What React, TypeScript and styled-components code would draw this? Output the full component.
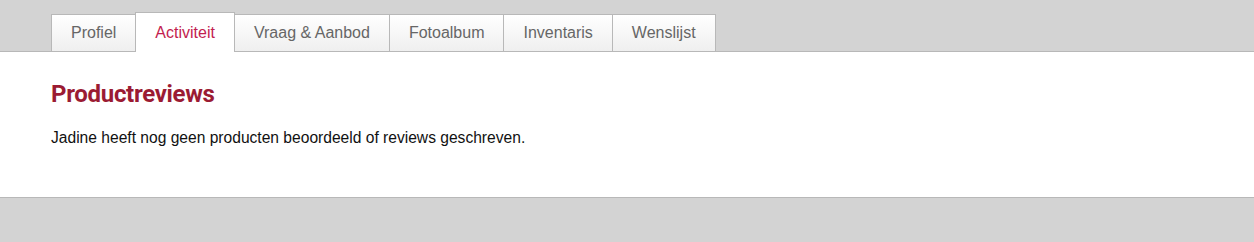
import { createGlobalStyle, styled } from 'styled-components';

const GlobalStyle = createGlobalStyle`
  html, body {
    margin: 0;
    padding: 0;
    background: #d3d3d3;
    font-family: 'Liberation Sans', Arial, sans-serif;
  }
`;

const Page = styled.div`
  display: flex;
  flex-direction: column;
`;

const TabBar = styled.nav`
  display: flex;
  align-items: flex-end;
  padding: 12px 0 0 51px;
  border-bottom: 1px solid #b8b8b8;
`;

const Tab = styled.a<{ $active?: boolean }>`
  display: block;
  height: 36px;
  line-height: 36px;
  padding: 0 19px;
  border: 1px solid #b8b8b8;
  border-bottom: none;
  margin-left: -1px;
  font-size: 16px;
  color: #666;
  text-decoration: none;
  white-space: nowrap;
  background: linear-gradient(#ffffff, #efefef);
  cursor: pointer;

  &:first-child {
    margin-left: 0;
  }

  ${({ $active }) =>
    $active &&
    `
    background: #fff;
    color: #c31e4f;
    padding-top: 2px;
    padding-bottom: 1px;
    margin-bottom: -1px;
  `}
`;

const Panel = styled.section`
  background: #fff;
  border-bottom: 1px solid #b8b8b8;
  padding: 27px 51px 48px;
`;

const Heading = styled.h2`
  margin: 0 0 18px;
  font-family: Roboto, 'Liberation Sans', sans-serif;
  font-weight: 700;
  font-size: 24px;
  line-height: 30px;
  letter-spacing: -0.3px;
  color: #9b1b33;
`;

const Text = styled.p`
  margin: 0;
  font-size: 15.6px;
  line-height: 22px;
  color: #111;
`;

const tabs = ['Profiel', 'Activiteit', 'Vraag & Aanbod', 'Fotoalbum', 'Inventaris', 'Wenslijst'];

export default function App() {
  return (
    <Page>
      <GlobalStyle />
      <TabBar>
        {tabs.map((t) => (
          <Tab key={t} $active={t === 'Activiteit'}>
            {t}
          </Tab>
        ))}
      </TabBar>
      <Panel>
        <Heading>Productreviews</Heading>
        <Text>Jadine heeft nog geen producten beoordeeld of reviews geschreven.</Text>
      </Panel>
    </Page>
  );
}
